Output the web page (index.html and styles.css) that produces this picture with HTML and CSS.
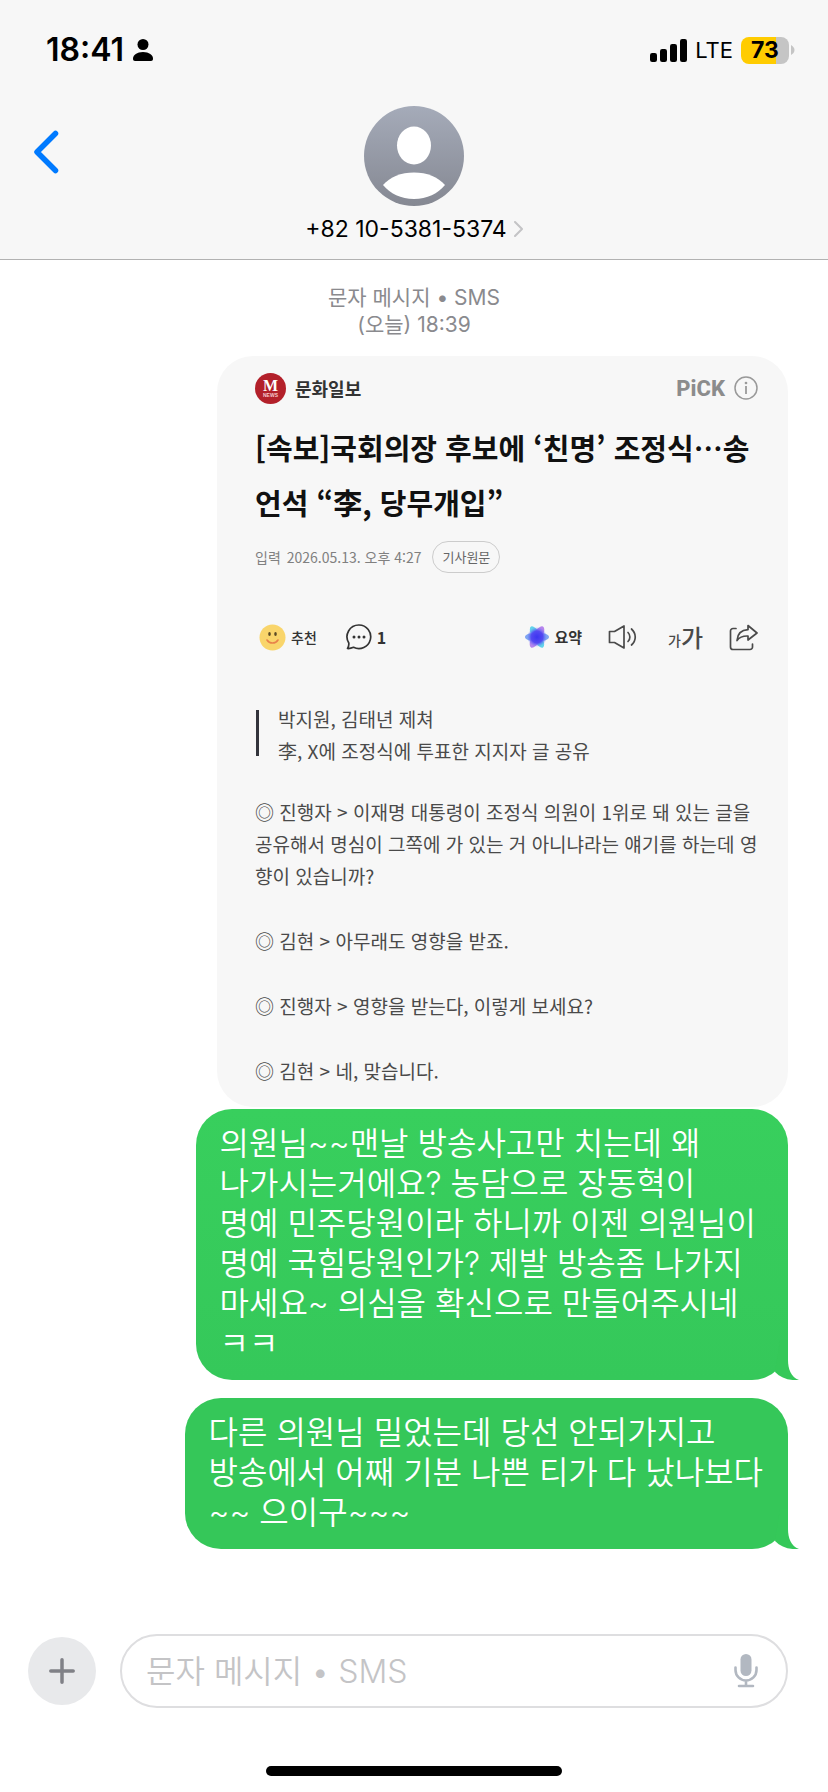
FILE: index.html
```html
<!DOCTYPE html>
<html lang="ko">
<head>
<meta charset="utf-8">
<meta name="viewport" content="width=device-width, initial-scale=1">
<title>문자 메시지</title>
<link rel="stylesheet" href="styles.css">
</head>
<body>
<header class="top">
  <div class="status">
    <div class="status-side">
      <span class="clock">18:41</span>
      <svg width="22" height="22" viewBox="0 0 22 22" aria-hidden="true"><circle cx="11" cy="5.500" r="5.500"/><path d="M1 19.500C1 16 5 13 11 13s10 3 10 6.500c0 1.800-.8 2.500-2 2.500H3c-1.200 0-2-.7-2-2.500z"/></svg>
    </div>
    <div class="status-side">
      <svg width="37" height="23" viewBox="0 0 37 23" aria-hidden="true"><rect x="0" y="14" width="7" height="9" rx="2.200"/><rect x="10" y="10" width="7" height="13" rx="2.200"/><rect x="20" y="5" width="7" height="18" rx="2.200"/><rect x="30" y="0" width="7" height="23" rx="2.200"/></svg>
      <span class="network">LTE</span>
      <div class="battery"><span class="battery-level">73</span><svg width="4" height="10" viewBox="0 0 4 10" aria-hidden="true"><path d="M0 0c2 1 3.500 3 3.500 5S2 9 0 10z" fill="#c5c5c5"/></svg></div>
    </div>
  </div>
  <div class="nav">
    <button class="back" type="button" aria-label="뒤로"><svg width="26" height="44" viewBox="0 0 26 44" fill="none" stroke="#007aff" stroke-width="5.500" stroke-linecap="round" stroke-linejoin="round"><path d="M22.500 3.500 4 22l18.500 18.500"/></svg></button>
    <button class="contact" type="button">
      <svg width="100" height="100" viewBox="0 0 100 100" aria-hidden="true"><defs><linearGradient id="av" x1="0" y1="0" x2="0" y2="1"><stop offset="0" stop-color="#a5abb9"/><stop offset="1" stop-color="#858892"/></linearGradient></defs><circle cx="50" cy="50" r="50" fill="url(#av)"/><ellipse cx="50" cy="39.500" rx="17" ry="19" fill="#fff"/><path d="M19 79c7-8 18-12.500 31-12.500S74 71 81 79c-7 8.500-18 14-31 14s-24-5.500-31-14z" fill="#fff"/></svg>
      <span class="number">+82 10-5381-5374 <svg width="9" height="16" viewBox="0 0 9 16" fill="none" stroke="#c4c4c6" stroke-width="2" stroke-linecap="round" stroke-linejoin="round" aria-hidden="true"><path d="m1 1 7 7-7 7"/></svg></span>
    </button>
  </div>
</header>

<main class="thread">
  <p class="stamp">문자 메시지 • SMS<br>(오늘) 18:39</p>

  <article class="clip">
    <div class="press">
      <svg width="31" height="31" viewBox="0 0 31 31" aria-hidden="true"><circle cx="15.500" cy="15.500" r="15.500" fill="#b3202a"/><text x="15.500" y="18" class="logo-m">M</text><text x="15.500" y="24" class="logo-news">NEWS</text></svg>
      <span class="press-name">문화일보</span>
      <span class="pick">PiCK</span>
      <svg width="24" height="24" viewBox="0 0 24 24" fill="none" stroke="#999" stroke-width="1.500" aria-hidden="true"><circle cx="12" cy="12" r="11"/><path d="M12 10v8" stroke-width="1.800"/><circle cx="12" cy="7" r=".6" fill="#999"/></svg>
    </div>
    <h1 class="headline">[속보]국회의장 후보에 ‘친명’ 조정식…송<br>언석 “李, 당무개입”</h1>
    <div class="dateline"><span>입력</span><span>2026.05.13. 오후 4:27</span><a class="origin" href="#">기사원문</a></div>
    <div class="tools">
      <button class="tool like" type="button"><svg width="27" height="27" viewBox="0 0 27 27"><circle cx="13.500" cy="13.500" r="13" fill="#f9d56b"/><ellipse cx="10.500" cy="10" rx="1.300" ry="2" fill="#5b4a25"/><ellipse cx="16.500" cy="10" rx="1.300" ry="2" fill="#5b4a25"/><path d="M8 16c2.500 4 8.500 4 11 0" fill="none" stroke="#e8824a" stroke-width="1.600" stroke-linecap="round"/></svg>추천</button>
      <button class="tool count" type="button"><svg width="26" height="26" viewBox="0 0 26 26" fill="none" stroke="#333" stroke-width="1.700" stroke-linejoin="round"><path d="M13 1a11.800 11.800 0 1 1-5.500 22.300c-2 .9-3.800 1.400-6 1.200C2.700 22.800 3 21 2.800 19A11.800 11.800 0 0 1 13 1z"/><g fill="#333" stroke="none"><circle cx="8" cy="13" r="1.500"/><circle cx="13" cy="13" r="1.500"/><circle cx="18" cy="13" r="1.500"/></g></svg>1</button>
      <button class="tool summary" type="button"><svg width="24" height="24" viewBox="0 0 24 24"><defs><radialGradient id="core"><stop offset="0" stop-color="#3b35f0"/><stop offset=".6" stop-color="#4d44f2" stop-opacity=".9"/><stop offset="1" stop-color="#6a7bf5" stop-opacity="0"/></radialGradient></defs><ellipse cx="12" cy="12" rx="4.500" ry="12" fill="#62d3ea" transform="rotate(-30 12 12)"/><ellipse cx="12" cy="12" rx="12" ry="4.500" fill="#7fa5f2"/><ellipse cx="12" cy="12" rx="4.800" ry="12" fill="#a566ea" opacity=".8" transform="rotate(30 12 12)"/><circle cx="12" cy="12" r="10" fill="url(#core)"/></svg>요약</button>
      <button class="tool" type="button" aria-label="본문 듣기"><svg width="30" height="26" viewBox="0 0 30 26" fill="none" stroke="#4a4a4a" stroke-width="1.700" stroke-linejoin="round" stroke-linecap="round"><path d="M1.500 7.500h5L16 2v22l-9.500-5.500h-5zM20 8.500c2.500 2.500 2.500 6.500 0 9M23.500 5c5 4.500 5 11.500 0 16"/></svg></button>
      <button class="tool sizer" type="button" aria-label="글자 크기"><span class="ga-small">가</span><span class="ga-big">가</span></button>
      <button class="tool" type="button" aria-label="공유"><svg width="29" height="27" viewBox="0 0 29 27" fill="none" stroke="#4a4a4a" stroke-width="1.700" stroke-linejoin="round" stroke-linecap="round"><path d="M7 4.500H4A2.500 2.500 0 0 0 1.500 7v16A2.500 2.500 0 0 0 4 25.500h17a2.500 2.500 0 0 0 2.500-2.500v-3M19 1.500l9 7.500-9 7v-4c-5-.2-8.500 1-11 4.500C8.500 10 12.500 6 19 5.700z"/></svg></button>
    </div>
    <blockquote class="lead">박지원, 김태년 제쳐<br>李, X에 조정식에 투표한 지지자 글 공유</blockquote>
    <div class="story">
      <p>◎ 진행자 &gt; 이재명 대통령이 조정식 의원이 1위로 돼 있는 글을<br>공유해서 명심이 그쪽에 가 있는 거 아니냐라는 얘기를 하는데 영<br>향이 있습니까?</p>
      <p>◎ 김현 &gt; 아무래도 영향을 받죠.</p>
      <p>◎ 진행자 &gt; 영향을 받는다, 이렇게 보세요?</p>
      <p>◎ 김현 &gt; 네, 맞습니다.</p>
    </div>
  </article>

  <div class="bubble bubble-first">의원님~~맨날 방송사고만 치는데 왜<br>나가시는거에요? 농담으로 장동혁이<br>명예 민주당원이라 하니까 이젠 의원님이<br>명예 국힘당원인가? 제발 방송좀 나가지<br>마세요~ 의심을 확신으로 만들어주시네<br>ㅋㅋ<svg class="tail" width="28" height="40" viewBox="0 0 28 40" aria-hidden="true"><path d="M8 0h8v20c0 9 3 17 11 20-10 .8-18-2-24-8z"/></svg></div>
  <div class="bubble">다른 의원님 밀었는데 당선 안되가지고<br>방송에서 어째 기분 나쁜 티가 다 났나보다<br>~~ 으이구~~~<svg class="tail" width="28" height="40" viewBox="0 0 28 40" aria-hidden="true"><path d="M8 0h8v20c0 9 3 17 11 20-10 .8-18-2-24-8z"/></svg></div>
</main>

<footer class="bottom">
  <form class="composer">
    <button class="add" type="button" aria-label="추가"><svg width="26" height="26" viewBox="0 0 26 26" stroke="#808187" stroke-width="3.500" stroke-linecap="round"><path d="M13 1.800v22.400M1.800 13h22.400"/></svg></button>
    <div class="field">
      <input class="entry" type="text" aria-label="메시지" placeholder="문자 메시지 • SMS">
      <button class="mic" type="button" aria-label="받아쓰기"><svg width="24" height="34" viewBox="0 0 24 34" fill="none" stroke="#b2b8c1" stroke-width="2.600" stroke-linecap="round"><rect x="6.500" y="0" width="11" height="22" rx="5.500" fill="#b2b8c1" stroke="none"/><path d="M1.500 13.500V16a10.500 10.500 0 0 0 21 0v-2.500M12 27v5M5 32h14"/></svg></button>
    </div>
  </form>
  <div class="home"></div>
</footer>
</body>
</html>
```
FILE: styles.css
```css
* { box-sizing: border-box; }

body {
  margin: 0;
  min-height: 100vh;
  display: flex;
  flex-direction: column;
  background: #fff;
  color: #000;
  font-family: Inter, "Noto Sans CJK KR", sans-serif;
}

button, input {
  margin: 0;
  padding: 0;
  border: 0;
  background: none;
  color: inherit;
  font: inherit;
}

p, h1, blockquote { margin: 0; }
svg { display: block; flex: none; }

.top {
  background: #f7f7f7;
  border-bottom: 1px solid #b2b2b2;
  padding-bottom: 17px;
}

.status {
  display: flex;
  justify-content: space-between;
  align-items: center;
  height: 106px;
  padding: 0 33px 6px 46px;
}
.status-side { display: flex; align-items: center; gap: 8px; }
.clock { font-size: 32px; font-weight: 600; line-height: 40px; }
.network { font-size: 22px; line-height: 28px; }
.battery { display: flex; align-items: center; gap: 2px; }
.battery-level {
  width: 48px;
  border-radius: 8px;
  background: linear-gradient(90deg, #ffcc00 73%, #c5c5c5 73%);
  font-size: 23px;
  font-weight: 700;
  line-height: 27px;
  text-align: center;
}

.nav {
  display: grid;
  grid-template-columns: 1fr auto 1fr;
  align-items: start;
}
.back { justify-self: start; padding: 24px 33px; }
.contact { display: flex; flex-direction: column; align-items: center; gap: 10px; }
.number { display: flex; align-items: center; gap: 7px; font-size: 23px; line-height: 26px; }

.thread {
  flex: 1;
  display: flex;
  flex-direction: column;
  align-items: flex-end;
  padding: 24px 40px 0;
}

.stamp {
  align-self: center;
  text-align: center;
  color: #8a8a8e;
  font-size: 21px;
  line-height: 27px;
}

.clip {
  width: 571px;
  max-width: 100%;
  margin-top: 18px;
  padding: 16px 30px 20px 38px;
  border-radius: 36px;
  background: #f7f7f7;
  color: #4a4a4a;
  font-family: "Noto Sans CJK KR", sans-serif;
}
.press { display: flex; align-items: center; gap: 9px; height: 32px; }
.logo-m { font: 700 16px "Liberation Serif", serif; fill: #fff; text-anchor: middle; }
.logo-news { font: 700 5px "Liberation Sans", sans-serif; fill: #f3c9cb; text-anchor: middle; }
.press-name { margin-right: auto; font-size: 18px; font-weight: 700; color: #333; }
.pick { font-family: Roboto, sans-serif; font-size: 22px; font-weight: 800; color: #8c8c8c; }

.headline {
  margin-top: 16px;
  font-size: 29px;
  line-height: 55px;
  font-weight: 700;
  color: #111;
  white-space: nowrap;
}

.dateline {
  display: flex;
  align-items: center;
  gap: 6px;
  margin-top: 11px;
  color: #808080;
  font-size: 14px;
  line-height: 20px;
}
.origin {
  margin-left: 5px;
  padding: 5px 9px;
  border: 1px solid #ccc;
  border-radius: 16px;
  color: #666;
  font-size: 13px;
  text-decoration: none;
}

.tools {
  display: flex;
  align-items: center;
  gap: 26px;
  height: 32px;
  margin-top: 48px;
  padding-left: 4px;
}
.tool { display: flex; align-items: center; gap: 5px; font-size: 14px; font-weight: 500; line-height: 20px; color: #333; }
.count { margin-left: 3px; margin-right: auto; font-size: 16px; font-weight: 700; }
.summary { font-size: 15px; font-weight: 700; }
.sizer { gap: 0; align-items: flex-end; margin-left: 4px; line-height: 28px; color: #4a4a4a; }
.ga-small { font-size: 14px; line-height: 22px; }
.ga-big { font-size: 24px; }

.lead {
  position: relative;
  margin-top: 50px;
  padding-left: 23px;
  font-size: 19px;
  line-height: 32px;
}
.lead::before {
  content: "";
  position: absolute;
  left: 1px;
  top: 7px;
  bottom: 11px;
  width: 3px;
  background: #33343c;
}
.story {
  display: flex;
  flex-direction: column;
  gap: 33px;
  margin-top: 29px;
  font-size: 19px;
  line-height: 32px;
  white-space: nowrap;
}

.bubble {
  position: relative;
  margin-top: 18px;
  padding: 15px 25px 16px 24px;
  border-radius: 36px;
  background: #35c759;
  color: #fff;
  font-size: 32px;
  line-height: 40px;
  font-weight: 350;
}
.bubble-first { margin-top: 2px; padding-right: 32px; background: linear-gradient(#38cf5d, #35c85a); }
.tail { position: absolute; right: -12px; bottom: 0; fill: #35c859; }

.composer { display: flex; align-items: center; gap: 24px; padding: 0 40px 0 28px; }
.add {
  flex: none;
  display: grid;
  place-items: center;
  width: 68px;
  height: 68px;
  border-radius: 50%;
  background: #e8e9eb;
}
.field {
  flex: 1;
  min-width: 0;
  display: flex;
  align-items: center;
  height: 74px;
  padding: 0 28px 0 24px;
  border: 2px solid #dedee0;
  border-radius: 37px;
}
.entry { flex: 1; min-width: 0; height: 48px; outline: 0; font-size: 32px; font-weight: 350; }
.entry::placeholder { color: #c4c4c6; opacity: 1; }

.home {
  width: 296px;
  height: 10px;
  margin: 58px auto 16px;
  border-radius: 5px;
  background: #000;
}
```
